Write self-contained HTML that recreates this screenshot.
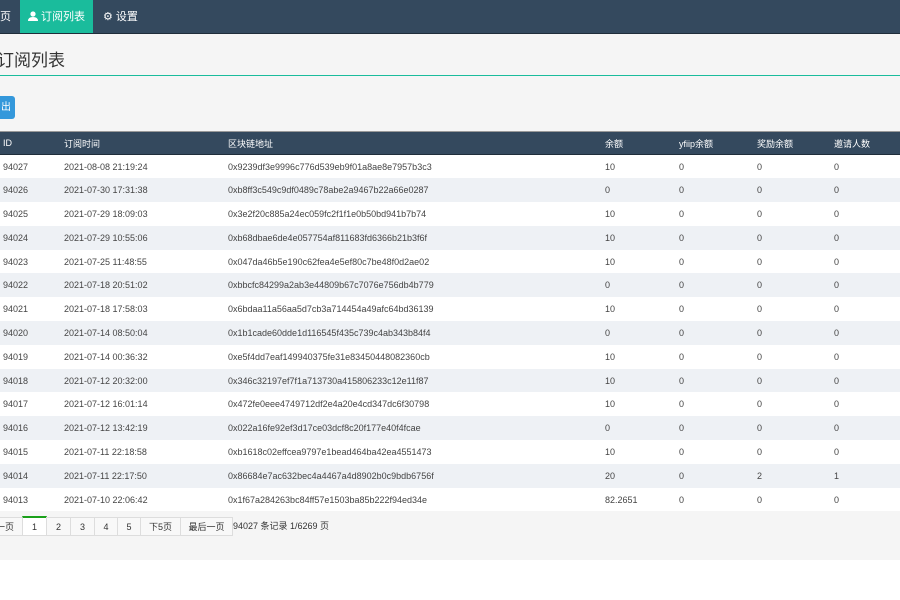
<!DOCTYPE html>
<html><head><meta charset="utf-8"><style>
*{margin:0;padding:0;box-sizing:border-box}
body{width:900px;height:600px;background:#fff;font-family:"Liberation Sans","Noto Sans CJK SC",sans-serif;overflow:hidden;position:relative}
.nav{height:34px;background:#34495e;border-bottom:1px solid #1f2d3a;position:relative;color:#fff;font-size:11px}
.nav span{position:absolute;top:0;height:33px;line-height:34px}
.act{left:20px;width:73px;background:#1abc9c;text-align:center}
.nav svg{vertical-align:-1px}
.main{position:absolute;top:34px;left:0;width:900px;height:526px;background:#f5f5f5}
h1{position:absolute;top:16px;left:-3px;font-size:17px;line-height:22px;font-weight:normal;color:#333}
.line{position:absolute;top:41px;left:0;width:900px;height:1px;background:#1abc9c}
.btn{position:absolute;top:62px;left:-4px;width:19px;height:23px;background:#3498db;border-radius:3px;color:#fff;font-size:10px;line-height:23px;text-align:right;padding-right:4px}
table{position:absolute;top:97px;left:0;width:900px;border-collapse:collapse;font-size:9px;color:#444}
th{background:#34495e;color:#fff;font-weight:normal;height:23px;text-align:left;border-top:1px solid #999;border-bottom:1px solid #1f2d3a}
td{height:23.8px;background:#fff}
tr:nth-child(odd) td{background:#eef1f5}
.pg{position:absolute;top:483px;left:0;font-size:9px;color:#333}
.pg span{position:absolute;top:0;height:19px;line-height:18px;border:1px solid #ddd;background:#f8f8f8;text-align:center}
.pg .c{border-top:2px solid #1aa01a;background:#fff;top:-1px;height:20px}
.info{position:absolute;top:485px;left:233px;font-size:9px;color:#333}
</style></head><body>
<div class="nav"><span style="left:0">页</span><span class="act"><svg width="10" height="10" viewBox="0 0 10 10"><circle cx="5" cy="3" r="2.6" fill="#fff"/><path d="M0 10 Q0 6 5 6 Q10 6 10 10Z" fill="#fff"/></svg> 订阅列表</span><span style="left:103px">&#9881; 设置</span></div>
<div class="main">
<h1>订阅列表</h1><div class="line"></div>
<div class="btn">出</div>
<table>
<colgroup><col style="width:64px"><col style="width:164px"><col style="width:377px"><col style="width:74px"><col style="width:78px"><col style="width:77px"><col></colgroup>
<tr><th style="padding-left:3px">ID</th><th>订阅时间</th><th>区块链地址</th><th>余额</th><th>yfiip余额</th><th>奖励余额</th><th>邀请人数</th></tr>
<tr><td style="padding-left:3px">94027</td><td>2021-08-08 21:19:24</td><td>0x9239df3e9996c776d539eb9f01a8ae8e7957b3c3</td><td>10</td><td>0</td><td>0</td><td>0</td></tr>
<tr><td style="padding-left:3px">94026</td><td>2021-07-30 17:31:38</td><td>0xb8ff3c549c9df0489c78abe2a9467b22a66e0287</td><td>0</td><td>0</td><td>0</td><td>0</td></tr>
<tr><td style="padding-left:3px">94025</td><td>2021-07-29 18:09:03</td><td>0x3e2f20c885a24ec059fc2f1f1e0b50bd941b7b74</td><td>10</td><td>0</td><td>0</td><td>0</td></tr>
<tr><td style="padding-left:3px">94024</td><td>2021-07-29 10:55:06</td><td>0xb68dbae6de4e057754af811683fd6366b21b3f6f</td><td>10</td><td>0</td><td>0</td><td>0</td></tr>
<tr><td style="padding-left:3px">94023</td><td>2021-07-25 11:48:55</td><td>0x047da46b5e190c62fea4e5ef80c7be48f0d2ae02</td><td>10</td><td>0</td><td>0</td><td>0</td></tr>
<tr><td style="padding-left:3px">94022</td><td>2021-07-18 20:51:02</td><td>0xbbcfc84299a2ab3e44809b67c7076e756db4b779</td><td>0</td><td>0</td><td>0</td><td>0</td></tr>
<tr><td style="padding-left:3px">94021</td><td>2021-07-18 17:58:03</td><td>0x6bdaa11a56aa5d7cb3a714454a49afc64bd36139</td><td>10</td><td>0</td><td>0</td><td>0</td></tr>
<tr><td style="padding-left:3px">94020</td><td>2021-07-14 08:50:04</td><td>0x1b1cade60dde1d116545f435c739c4ab343b84f4</td><td>0</td><td>0</td><td>0</td><td>0</td></tr>
<tr><td style="padding-left:3px">94019</td><td>2021-07-14 00:36:32</td><td>0xe5f4dd7eaf149940375fe31e83450448082360cb</td><td>10</td><td>0</td><td>0</td><td>0</td></tr>
<tr><td style="padding-left:3px">94018</td><td>2021-07-12 20:32:00</td><td>0x346c32197ef7f1a713730a415806233c12e11f87</td><td>10</td><td>0</td><td>0</td><td>0</td></tr>
<tr><td style="padding-left:3px">94017</td><td>2021-07-12 16:01:14</td><td>0x472fe0eee4749712df2e4a20e4cd347dc6f30798</td><td>10</td><td>0</td><td>0</td><td>0</td></tr>
<tr><td style="padding-left:3px">94016</td><td>2021-07-12 13:42:19</td><td>0x022a16fe92ef3d17ce03dcf8c20f177e40f4fcae</td><td>0</td><td>0</td><td>0</td><td>0</td></tr>
<tr><td style="padding-left:3px">94015</td><td>2021-07-11 22:18:58</td><td>0xb1618c02effcea9797e1bead464ba42ea4551473</td><td>10</td><td>0</td><td>0</td><td>0</td></tr>
<tr><td style="padding-left:3px">94014</td><td>2021-07-11 22:17:50</td><td>0x86684e7ac632bec4a4467a4d8902b0c9bdb6756f</td><td>20</td><td>0</td><td>2</td><td>1</td></tr>
<tr><td style="padding-left:3px">94013</td><td>2021-07-10 22:06:42</td><td>0x1f67a284263bc84ff57e1503ba85b222f94ed34e</td><td>82.2651</td><td>0</td><td>0</td><td>0</td></tr>
</table>
<div class="pg">
<span style="left:-20px;width:43px;text-align:right;padding-right:8px">一页</span>
<span class="c" style="left:22px;width:25px">1</span>
<span style="left:46px;width:25px">2</span>
<span style="left:70px;width:25px">3</span>
<span style="left:94px;width:24px">4</span>
<span style="left:117px;width:24px">5</span>
<span style="left:140px;width:41px">下5页</span>
<span style="left:180px;width:53px">最后一页</span>
</div>
<div class="info">94027 条记录 1/6269 页</div>
</div>
</body></html>
